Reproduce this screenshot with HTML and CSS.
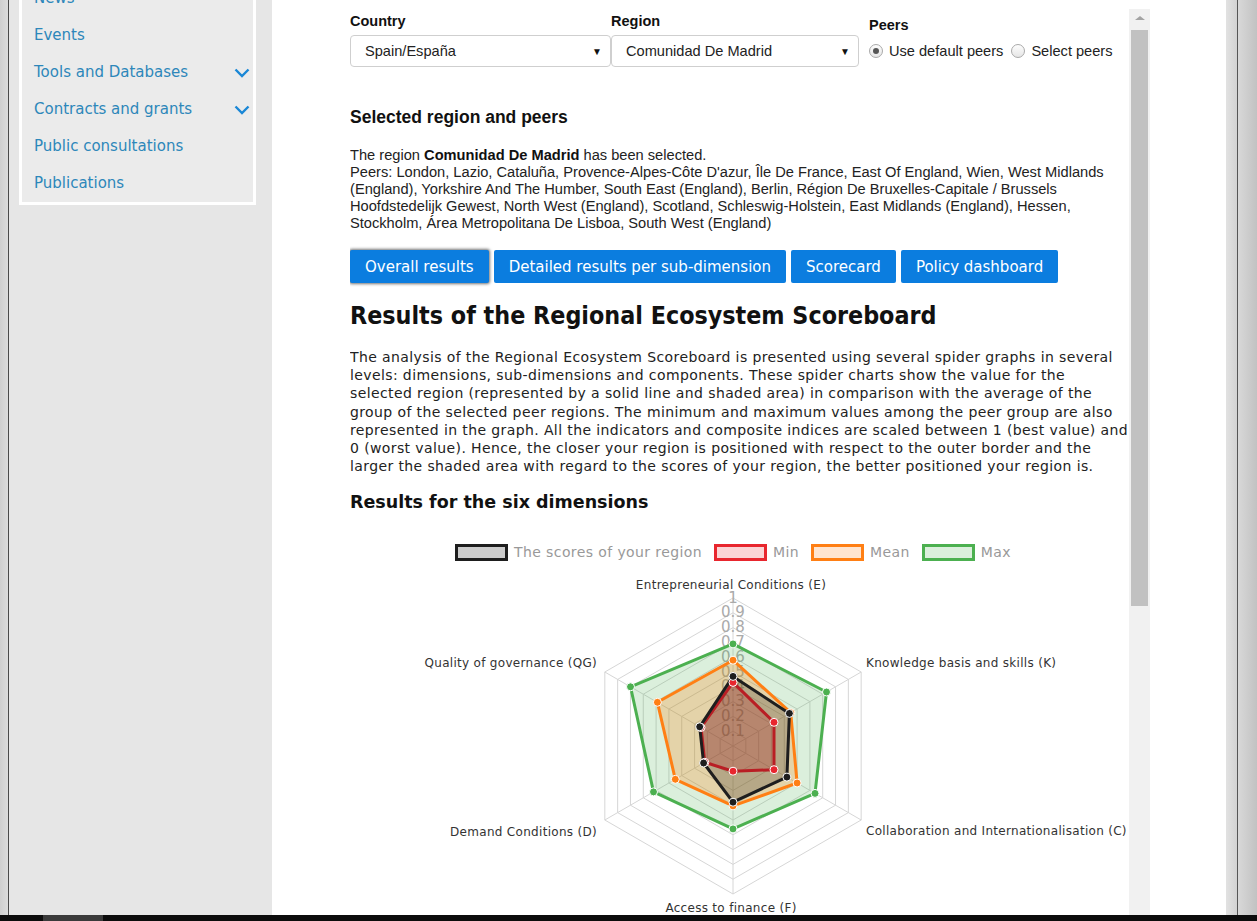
FILE: index.html
```html
<!DOCTYPE html>
<html lang="en">
<head>
<meta charset="utf-8">
<title>Regional Ecosystem Scoreboard</title>
<link rel="stylesheet" href="styles.css">
</head>
<body>
<div class="screen">
  <div class="edge-left"></div>
  <aside class="side-col">
    <nav class="side-menu">
      <a class="side-item">News</a>
      <a class="side-item">Events</a>
      <a class="side-item">Tools and Databases
        <svg class="chev" width="16" height="10" viewBox="0 0 16 10"><path d="M1.5 1.5 L8 8 L14.5 1.5" fill="none" stroke="#1a87d6" stroke-width="2.4"/></svg></a>
      <a class="side-item">Contracts and grants
        <svg class="chev" width="16" height="10" viewBox="0 0 16 10"><path d="M1.5 1.5 L8 8 L14.5 1.5" fill="none" stroke="#1a87d6" stroke-width="2.4"/></svg></a>
      <a class="side-item">Public consultations</a>
      <a class="side-item">Publications</a>
    </nav>
  </aside>
  <main class="main-panel">
    <div class="frame">
      <div class="frame-content">
        <div class="form-row">
          <div class="field field-country">
            <div class="field-label">Country</div>
            <div class="select"><span>Spain/España</span><span class="select-arrow">▼</span></div>
          </div>
          <div class="field field-region">
            <div class="field-label">Region</div>
            <div class="select"><span>Comunidad De Madrid</span><span class="select-arrow">▼</span></div>
          </div>
          <div class="field field-peers">
            <div class="field-label">Peers</div>
            <div class="radio-row">
              <span class="radio checked"></span><span class="radio-text">Use default peers</span>
              <span class="radio"></span><span class="radio-text">Select peers</span>
            </div>
          </div>
        </div>

        <h3 class="sel-title">Selected region and peers</h3>
        <p class="sel-text">The region <b>Comunidad De Madrid</b> has been selected.<br>Peers: London, Lazio, Cataluña, Provence-Alpes-Côte D'azur, Île De France, East Of England, Wien, West Midlands (England), Yorkshire And The Humber, South East (England), Berlin, Région De Bruxelles-Capitale / Brussels Hoofdstedelijk Gewest, North West (England), Scotland, Schleswig-Holstein, East Midlands (England), Hessen, Stockholm, Área Metropolitana De Lisboa, South West (England)</p>

        <div class="tabs">
          <button class="tab active">Overall results</button>
          <button class="tab">Detailed results per sub-dimension</button>
          <button class="tab">Scorecard</button>
          <button class="tab">Policy dashboard</button>
        </div>

        <h2 class="res-title">Results of the Regional Ecosystem Scoreboard</h2>
        <p class="res-text">The analysis of the Regional Ecosystem Scoreboard is presented using several spider graphs in several levels: dimensions, sub-dimensions and components. These spider charts show the value for the selected region (represented by a solid line and shaded area) in comparison with the average of the group of the selected peer regions. The minimum and maximum values among the peer group are also represented in the graph. All the indicators and composite indices are scaled between 1 (best value) and 0 (worst value). Hence, the closer your region is positioned with respect to the outer border and the larger the shaded area with regard to the scores of your region, the better positioned your region is.</p>

        <h3 class="dim-title">Results for the six dimensions</h3>

        <div class="legend">
          <span class="lg-box lg-black"></span><span class="lg-text">The scores of your region</span>
          <span class="lg-box lg-red"></span><span class="lg-text">Min</span>
          <span class="lg-box lg-orange"></span><span class="lg-text">Mean</span>
          <span class="lg-box lg-green"></span><span class="lg-text">Max</span>
        </div>

        <svg class="radar" width="779" height="345" viewBox="0 0 779 345">
          <defs>
            <polygon id="hex" points="0,-1 0.866,-0.5 0.866,0.5 0,1 -0.866,0.5 -0.866,-0.5" fill="none" stroke="#d6d6d6" stroke-width="1" vector-effect="non-scaling-stroke"/>
          </defs>
          <g>
            <use href="#hex" transform="translate(383 175) scale(14.8)"/>
            <use href="#hex" transform="translate(383 175) scale(29.6)"/>
            <use href="#hex" transform="translate(383 175) scale(44.4)"/>
            <use href="#hex" transform="translate(383 175) scale(59.2)"/>
            <use href="#hex" transform="translate(383 175) scale(74)"/>
            <use href="#hex" transform="translate(383 175) scale(88.8)"/>
            <use href="#hex" transform="translate(383 175) scale(103.6)"/>
            <use href="#hex" transform="translate(383 175) scale(118.4)"/>
            <use href="#hex" transform="translate(383 175) scale(133.2)"/>
            <use href="#hex" transform="translate(383 175) scale(148)"/>
          </g>
          <g stroke="#d6d6d6" stroke-width="1">
            <line x1="383" y1="175" x2="383" y2="27"/>
            <line x1="383" y1="175" x2="511.2" y2="101"/>
            <line x1="383" y1="175" x2="511.2" y2="249"/>
            <line x1="383" y1="175" x2="383" y2="323"/>
            <line x1="383" y1="175" x2="254.8" y2="249"/>
            <line x1="383" y1="175" x2="254.8" y2="101"/>
          </g>
          <g class="ticks" text-anchor="middle">
            <text x="383" y="160.2">0.1</text>
            <text x="383" y="145.4">0.2</text>
            <text x="383" y="130.6">0.3</text>
            <text x="383" y="115.8">0.4</text>
            <text x="383" y="101">0.5</text>
            <text x="383" y="86.2">0.6</text>
            <text x="383" y="71.4">0.7</text>
            <text x="383" y="56.6">0.8</text>
            <text x="383" y="41.8">0.9</text>
            <text x="383" y="27">1</text>
          </g>

          <polygon points="383,72.9 476.5,121 465,222.4 383,257.9 303.5,220.9 280.5,115.8" fill="rgba(76,175,80,0.2)" stroke="#4cb050" stroke-width="3" stroke-linejoin="round"/>
          <polygon points="383,89.2 440.7,141.7 447.1,212 383,234.9 325.3,208.3 307.4,131.3" fill="rgba(255,127,14,0.25)" stroke="#ff7f14" stroke-width="3" stroke-linejoin="round"/>
          <polygon points="383,111.4 424,151.3 424,198.7 383,200.2 354.8,191.3 351,156.5" fill="rgba(232,38,46,0.25)" stroke="#e8262e" stroke-width="3" stroke-linejoin="round"/>
          <polygon points="383,105.4 439.4,142.4 436.9,206.1 383,231.2 353.6,192 349.7,155.8" fill="rgba(0,0,0,0.2)" stroke="#1e1e1e" stroke-width="3" stroke-linejoin="round"/>

          <g fill="#4cb050" stroke="#fff" stroke-width="1">
            <circle cx="383" cy="72.9" r="4"/><circle cx="476.5" cy="121" r="4"/><circle cx="465" cy="222.4" r="4"/>
            <circle cx="383" cy="257.9" r="4"/><circle cx="303.5" cy="220.9" r="4"/><circle cx="280.5" cy="115.8" r="4"/>
          </g>
          <g fill="#ff7f14" stroke="#fff" stroke-width="1">
            <circle cx="383" cy="89.2" r="4"/><circle cx="440.7" cy="141.7" r="4"/><circle cx="447.1" cy="212" r="4"/>
            <circle cx="383" cy="234.9" r="4"/><circle cx="325.3" cy="208.3" r="4"/><circle cx="307.4" cy="131.3" r="4"/>
          </g>
          <g fill="#e8262e" stroke="#fff" stroke-width="1">
            <circle cx="383" cy="111.4" r="4"/><circle cx="424" cy="151.3" r="4"/><circle cx="424" cy="198.7" r="4"/>
            <circle cx="383" cy="200.2" r="4"/><circle cx="354.8" cy="191.3" r="4"/><circle cx="351" cy="156.5" r="4"/>
          </g>
          <g fill="#1e1e1e" stroke="#fff" stroke-width="1">
            <circle cx="383" cy="105.4" r="4"/><circle cx="439.4" cy="142.4" r="4"/><circle cx="436.9" cy="206.1" r="4"/>
            <circle cx="383" cy="231.2" r="4"/><circle cx="353.6" cy="192" r="4"/><circle cx="349.7" cy="155.8" r="4"/>
          </g>

          <g class="axis-labels">
            <text x="381" y="18" text-anchor="middle">Entrepreneurial Conditions (E)</text>
            <text x="516" y="96" text-anchor="start">Knowledge basis and skills (K)</text>
            <text x="516" y="264" text-anchor="start">Collaboration and Internationalisation (C)</text>
            <text x="381" y="341" text-anchor="middle">Access to finance (F)</text>
            <text x="247" y="265" text-anchor="end">Demand Conditions (D)</text>
            <text x="247" y="96" text-anchor="end">Quality of governance (QG)</text>
          </g>
        </svg>
      </div>
      <div class="scrollbar">
        <div class="sb-arrow"></div>
        <div class="sb-thumb"></div>
      </div>
    </div>
  </main>
  <div class="gutter-right"></div>
  <div class="edge-right"></div>
</div>
<div class="taskbar"><span class="task-btn"></span></div>
</body>
</html>
```

FILE: styles.css
```css
* { box-sizing: border-box; }
html, body { margin: 0; padding: 0; }
body {
  width: 1257px;
  height: 921px;
  overflow: hidden;
  background: #e6e6e6;
  font-family: "Liberation Sans", Arial, sans-serif;
  color: #222;
}
.screen {
  display: flex;
  height: 915px;
  overflow: hidden;
}
.edge-left {
  width: 9px;
  flex: none;
  background: linear-gradient(to right, #cfcfcf, #dcdcdc);
  border-right: 1px solid #4a4a4a;
}
.side-col {
  width: 263px;
  flex: none;
  padding-left: 10px;
  background: #e6e6e6;
}
.side-menu {
  width: 237px;
  margin-top: -24px;
  border: 3px solid #fff;
  border-top: none;
  background: #ebebeb;
  padding: 3px 0 1px 12px;
  display: flex;
  flex-direction: column;
}
.side-item {
  height: 37px;
  display: flex;
  align-items: center;
  justify-content: space-between;
  font-family: "DejaVu Sans", Verdana, sans-serif;
  font-size: 15px;
  color: #2d87ba;
  padding-right: 3px;
}
.chev { flex: none; margin-top: 3px; }

.main-panel {
  width: 954px;
  flex: none;
  background: #fff;
  padding: 9px 0 0 78px;
}
.frame {
  display: flex;
  width: 800px;
  height: 906px;
  overflow: hidden;
}
.frame-content {
  width: 779px;
  flex: none;
  overflow: hidden;
  padding-top: 4px;
}
.scrollbar {
  width: 21px;
  flex: none;
  background: #f1f1f1;
  padding: 0 2px;
}
.sb-arrow {
  width: 0; height: 0;
  margin: 7px auto 0;
  border-left: 5px solid transparent;
  border-right: 5px solid transparent;
  border-bottom: 4px solid #a3a3a3;
}
.sb-thumb {
  margin-top: 10px;
  height: 576px;
  background: #c1c1c1;
}

/* form */
.form-row { display: flex; }
.field-country { width: 261px; }
.field-region { width: 248px; }
.field-peers { margin-left: 10px; padding-top: 4px; }
.field-label {
  font-weight: bold;
  font-size: 14.5px;
  line-height: 16px;
  margin-bottom: 6px;
  color: #111;
}
.field-peers .field-label { margin-bottom: 8px; }
.select {
  height: 32px;
  border: 1px solid #cfcfcf;
  border-radius: 4px;
  display: flex;
  align-items: center;
  justify-content: space-between;
  padding: 0 8px 0 14px;
  font-size: 14.6px;
  color: #222;
}
.select-arrow { font-size: 10px; color: #111; }
.radio-row {
  display: flex;
  align-items: center;
  height: 20px;
  font-size: 14.6px;
  color: #222;
}
.radio {
  width: 14px; height: 14px;
  border-radius: 50%;
  border: 1px solid #a9a9a9;
  background: linear-gradient(#fdfdfd, #e6e6e6);
  display: inline-flex;
  align-items: center;
  justify-content: center;
  margin-right: 6px;
}
.radio.checked::after {
  content: "";
  width: 6px; height: 6px;
  border-radius: 50%;
  background: #555;
}
.radio-text { margin-right: 8px; }

.sel-title {
  margin: 40px 0 0;
  font-size: 17.5px;
  line-height: 20px;
  font-weight: bold;
  color: #111;
}
.sel-text {
  margin: 20px 0 0;
  font-size: 14.65px;
  line-height: 17px;
  color: #222;
}
.sel-text b { color: #111; }

.tabs {
  display: flex;
  gap: 5px;
  margin-top: 18px;
}
.tab {
  height: 33px;
  border: none;
  border-radius: 2px;
  background: #0b7ddf;
  color: #fff;
  font-family: "DejaVu Sans", Verdana, sans-serif;
  font-size: 15px;
  padding: 0 15px;
  cursor: pointer;
}
.tab.active { box-shadow: 0 0 3px 1px rgba(0,0,0,0.55); }

.res-title {
  margin: 19px 0 0;
  font-family: "DejaVu Sans Condensed", "DejaVu Sans", sans-serif;
  font-weight: bold;
  font-size: 24.8px;
  line-height: 28px;
  color: #111;
}
.res-text {
  margin: 18px 0 0;
  font-family: "DejaVu Sans", Verdana, sans-serif;
  font-size: 14px;
  letter-spacing: 0.39px;
  line-height: 18.2px;
  color: #222;
}
.dim-title {
  margin: 16px 0 0;
  font-family: "DejaVu Sans", Verdana, sans-serif;
  font-weight: bold;
  font-size: 17.5px;
  line-height: 22px;
  color: #111;
}

.legend {
  width: 766px;
  margin-top: 29px;
  height: 20px;
  display: flex;
  align-items: center;
  justify-content: center;
  font-family: "DejaVu Sans", Verdana, sans-serif;
  font-size: 14px;
  letter-spacing: 0.4px;
  color: #999;
}
.lg-box {
  width: 53px;
  height: 17px;
  border: 3px solid;
  margin-right: 6px;
}
.lg-text { margin-right: 12px; }
.lg-text:last-child { margin-right: 0; }
.lg-black { border-color: #1e1e1e; background: #ccc; }
.lg-red { border-color: #e8262e; background: #fbd4d5; }
.lg-orange { border-color: #ff7f14; background: #ffe5d0; }
.lg-green { border-color: #4cb050; background: #dbefdc; }

.radar {
  display: block;
  margin-top: 9px;
  overflow: visible;
}
.ticks text {
  font-family: "DejaVu Sans", sans-serif;
  font-size: 15px;
  fill: #aaa;
  dominant-baseline: middle;
}
.axis-labels text {
  font-family: "DejaVu Sans", sans-serif;
  font-size: 12px;
  letter-spacing: 0.3px;
  fill: #333;
}

.gutter-right {
  width: 11px;
  flex: none;
  background: linear-gradient(to right, #e2e2e2, #d2d2d2);
}
.edge-right {
  width: 20px;
  flex: none;
  border-left: 1px solid #555;
  background: linear-gradient(to right, #d8d8d8, #c2c2c2);
}
.taskbar {
  height: 6px;
  background: #0c0c0c;
  display: flex;
}
.task-btn {
  width: 60px;
  margin-left: 43px;
  background: #3a3a3a;
}
```
